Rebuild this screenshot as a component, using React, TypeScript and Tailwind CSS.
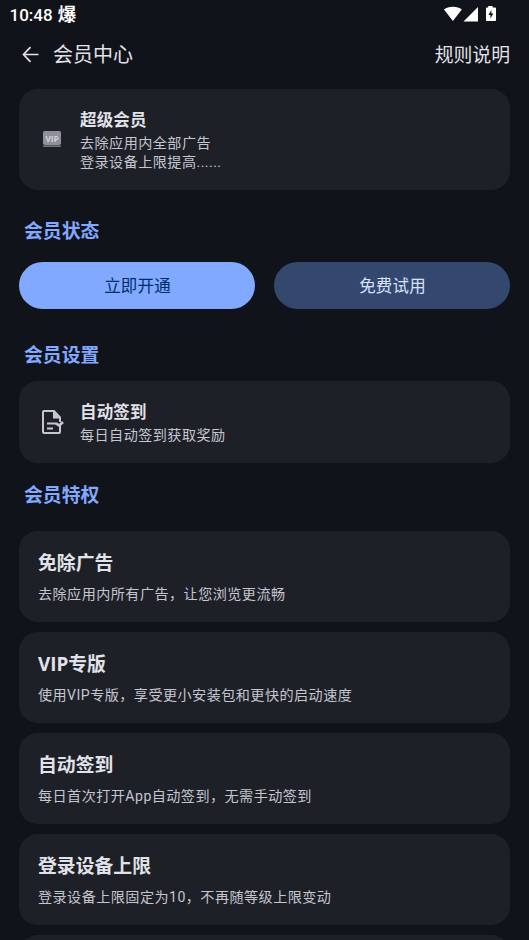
import type { ReactNode } from "react";

const benefits = [
  { title: "免除广告", text: "去除应用内所有广告，让您浏览更流畅" },
  { title: "VIP专版", text: "使用VIP专版，享受更小安装包和更快的启动速度" },
  { title: "自动签到", text: "每日首次打开App自动签到，无需手动签到" },
  { title: "登录设备上限", text: "登录设备上限固定为10，不再随等级上限变动" },
];

const StatusBar = () => {
  return (
    <div className="flex h-7 items-center justify-between pl-[9.5px] pr-[33px] text-white">
      <div className="flex items-center gap-[5px] pt-[1px]">
        <span className="pt-[1px] text-[17px] font-medium leading-none">10:48</span>
        <span className="pt-[1px] text-[18.5px] font-bold leading-none">爆</span>
      </div>
      <svg className="h-[16px] w-[52px]" viewBox="0 0 52 16" fill="currentColor">
        <path d="M0 3.6C2.2 1.8 5.3.8 8.9.8s6.7 1 8.9 2.8L8.9 15z" />
        <path d="M34 1v14.5H19.5z" />
        <path
          fillRule="evenodd"
          d="M44.2 0h4.4v1.6h2.6c.5 0 .8.3.8.8v11.8c0 .5-.3.8-.8.8h-8.4c-.5 0-.8-.3-.8-.8V2.4c0-.5.3-.8.8-.8h1.4zM47.4 4l-3 5h2v3.6l3-5h-2z"
        />
      </svg>
    </div>
  );
};

const Header = () => {
  return (
    <header className="flex h-[52px] items-center pl-[22px] pr-[19px] text-[#e2e2e9]">
      <svg className="h-[17px] w-[17px]" viewBox="0 0 17 17" fill="none" stroke="currentColor" strokeWidth="1.7">
        <path d="M16.5 8.5H1.8M8.5 1.2 1.5 8.5l7 7.3" />
      </svg>
      <h1 className="ml-[14px] pt-[1px] text-[20px] leading-none">会员中心</h1>
      <button className="ml-auto pt-[4px] text-[18.83px] leading-none">规则说明</button>
    </header>
  );
};

const SectionTitle = ({ children }: { children: ReactNode }) => {
  return <h2 className="pl-[24px] text-[18.83px] font-bold leading-[26px] text-[#80a9ff]">{children}</h2>;
};

const VipIcon = () => {
  return (
    <svg className="mb-[1px] h-[16px] w-[18px] ml-[1px]" viewBox="0 0 18 16">
      <rect width="18" height="14" rx="1.8" fill="#8e909a" />
      <rect y="14.5" width="18" height="1.3" rx=".6" fill="#8e909a" />
      <text
        x="9"
        y="10.5"
        textAnchor="middle"
        fill="#d0d1da"
        fontFamily="Open Sans"
        fontSize="8.2"
        fontWeight="700"
      >
        VIP
      </text>
    </svg>
  );
};

const SignIcon = () => {
  return (
    <svg className="h-[24px] w-[23px]" viewBox="0 0 23 24" fill="none" stroke="#c5c6d0" strokeWidth="2">
      <path d="M18 16v6c0 .7-.4 1-1 1H2c-.7 0-1-.4-1-1V2c0-.7.4-1 1-1h10l6 6.5V12" />
      <path d="M11 1v7.5h8z" fill="#c5c6d0" stroke="none" />
      <path d="M5 13.5h9.500M5 18.4h6" />
      <path d="m14 13.300 3.300 2.200 3.700-3.500" strokeWidth="2.6" />
    </svg>
  );
};

const InfoCard = ({ icon, title, children }: { icon: ReactNode; title: string; children: ReactNode }) => {
  return (
    <div className="mx-[19px] flex items-center rounded-[19px] bg-[#1e2028] py-[18px]">
      <div className="flex w-[61px] shrink-0 pl-[23px]">{icon}</div>
      <div className="pt-px">
        <h3 className="mb-px text-[16.5px] font-bold leading-[25px] tracking-[0.15px] text-[#e2e2e9]">{title}</h3>
        <div className="text-[14.12px] leading-[19px] tracking-[0.45px] text-[#c5c6d0]">{children}</div>
      </div>
    </div>
  );
};

const App = () => {
  return (
    <div className="h-[940px] w-full overflow-hidden bg-[#11131a] font-['Roboto','Noto_Sans_CJK_SC',sans-serif]">
      <StatusBar />
      <Header />

      <div className="mt-[9px]">
        <InfoCard icon={<VipIcon />} title="超级会员">
          <p>去除应用内全部广告</p>
          <p>登录设备上限提高......</p>
        </InfoCard>
      </div>

      <div className="mt-[29px]">
        <SectionTitle>会员状态</SectionTitle>
      </div>
      <div className="mt-[17px] flex gap-[19px] px-[19px] text-[16.5px] tracking-[0.15px]">
        <button className="h-[47px] flex-1 rounded-full bg-[#80a9ff] pl-px pt-[3px] text-[#002e69]">立即开通</button>
        <button className="h-[47px] flex-1 rounded-full bg-[#33476f] pl-px pt-[3px] text-[#d8e2ff]">免费试用</button>
      </div>

      <div className="mb-[12px] mt-[34px]">
        <SectionTitle>会员设置</SectionTitle>
      </div>
      <InfoCard icon={<SignIcon />} title="自动签到">
        <p>每日自动签到获取奖励</p>
      </InfoCard>

      <div className="mb-[22px] mt-[20px]">
        <SectionTitle>会员特权</SectionTitle>
      </div>
      <div className="flex flex-col gap-[10px] px-[19px]">
        {benefits.map((item) => (
          <div key={item.title} className="h-[91px] rounded-[19px] bg-[#1e2028] px-[19px] pt-[20px]">
            <h3 className="font-['Open_Sans','Noto_Sans_CJK_SC',sans-serif] text-[18.83px] font-bold leading-[25px] text-[#e2e2e9]">
              {item.title}
            </h3>
            <p className="mt-[9px] text-[14.12px] leading-[19px] tracking-[0.45px] text-[#c5c6d0]">{item.text}</p>
          </div>
        ))}
        <div className="h-[91px] shrink-0 rounded-[19px] bg-[#1e2028]" />
      </div>
    </div>
  );
};

export default App;
